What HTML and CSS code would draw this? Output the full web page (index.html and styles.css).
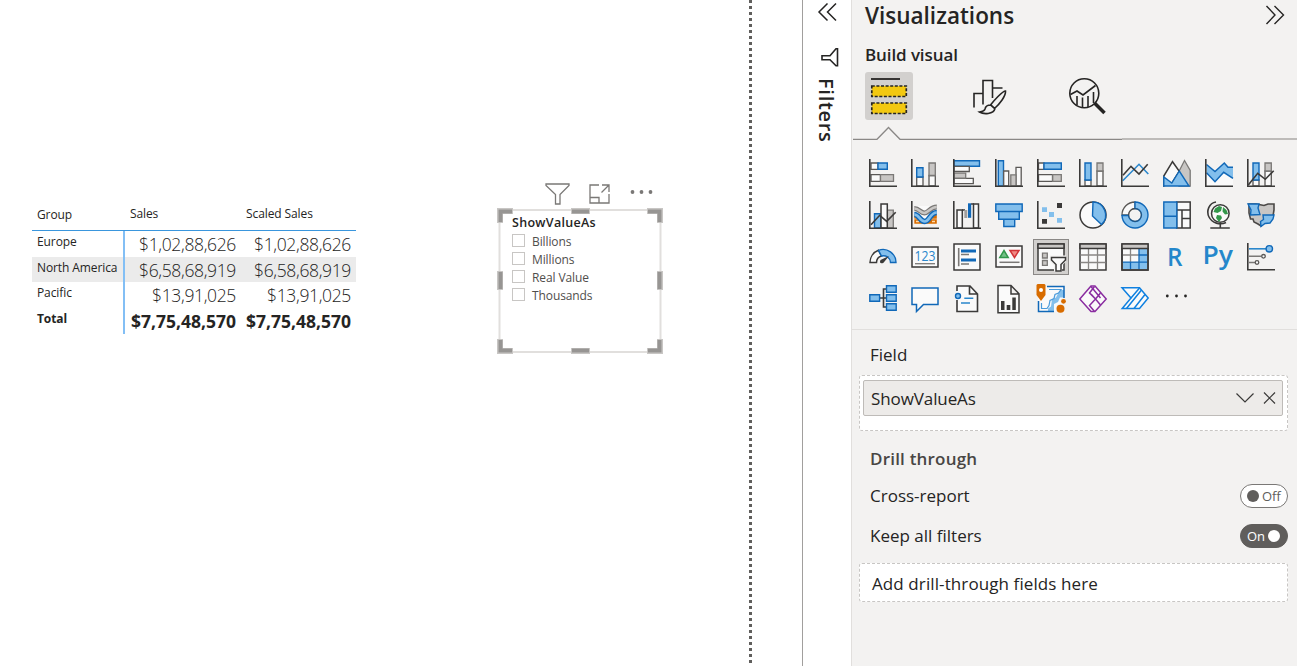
FILE: index.html
```
<!DOCTYPE html>
<html lang="en">
<head>
<meta charset="utf-8">
<title>Visualizations</title>
<link rel="stylesheet" href="styles.css">
</head>
<body>
<div class="app">
  <main class="canvas">
    <section class="matrix">
      <div class="row head"><span class="name group">Group</span><span class="col">Sales</span><span class="col scaled">Scaled Sales</span></div>
      <div class="row"><span class="name">Europe</span><span class="val">$1,02,88,626</span><span class="val">$1,02,88,626</span></div>
      <div class="row alt"><span class="name">North America</span><span class="val">$6,58,68,919</span><span class="val">$6,58,68,919</span></div>
      <div class="row"><span class="name">Pacific</span><span class="val">$13,91,025</span><span class="val">$13,91,025</span></div>
      <div class="row total"><span class="name">Total</span><span class="val">$7,75,48,570</span><span class="val">$7,75,48,570</span></div>
    </section>
    <section class="slicer">
      <svg class="tools" width="110" height="24" viewBox="0 0 110 24" fill="none" stroke="#7a7876" stroke-width="1.3">
        <path d="M1 2h23v1.500l-9 9V22h-4.500v-9.500L1 3.500z"/>
        <path d="M54 3H45v18h19V12M45 15.500h9V21M57 3h7v7M64 3l-7.500 7.500"/>
        <g fill="#7a7876" stroke="none"><circle cx="87.500" cy="10" r="1.900"/><circle cx="96.500" cy="10" r="1.900"/><circle cx="105.500" cy="10" r="1.900"/></g>
      </svg>
      <div class="slicer-box">
        <svg class="handles" width="166" height="146" viewBox="0 0 166 146" fill="none">
          <rect x="2.500" y="2" width="161" height="142" stroke="#e1dfdd" stroke-width="2"/>
          <g stroke="#c8c6c4" stroke-width="6"><path d="M3 15V3h13M150 3h13v12M3 131v12h13M150 143h13v-12M74 3h19M74 143h19M3 63v19M163 63v19"/></g>
          <g stroke="#979593" stroke-width="4"><path d="M3.500 14V3.500H15M151 3.500h11.500V14M3.500 132v10.500H15M151 142.500h11.500V132M75 3.500h17M75 142.500h17M3.500 64v17M162.500 64v17"/></g>
        </svg>
        <div class="slicer-title">ShowValueAs</div>
        <ul>
          <li><i></i><span>Billions</span></li>
          <li><i></i><span>Millions</span></li>
          <li><i></i><span>Real Value</span></li>
          <li><i></i><span>Thousands</span></li>
        </ul>
      </div>
    </section>
    <div class="page-edge"></div>
  </main>

  <aside class="filters">
    <svg width="20" height="20" viewBox="0 0 20 20" fill="none" stroke="#252423" stroke-width="1.500"><path d="M10.500 .500L2 9l8.500 8.500M19 .500L10.500 9l8.500 8.500"/></svg>
    <svg class="funnel" width="20" height="20" viewBox="0 0 20 20" fill="none" stroke="#252423" stroke-width="1.600"><path d="M17.500 .800v17H16l-6-6H2v-4h8l6-7z"/></svg>
    <span>Filters</span>
  </aside>

  <aside class="pane">
    <header>
      <h1>Visualizations</h1>
      <svg width="20" height="20" viewBox="0 0 20 20" fill="none" stroke="#252423" stroke-width="1.400"><path d="M1.500 1l8.500 9-8.500 9M9.500 1l9 9-9 9"/></svg>
    </header>
    <h2>Build visual</h2>
    <div class="tabs">
      <div class="tab active"><svg width="48" height="48" viewBox="0 0 48 48"><path d="M6 7h29" stroke="#252423" stroke-width="1.800"/><g fill="#f2c811" stroke="#252423" stroke-width="1.700" stroke-dasharray="3 1.600"><rect x="6.800" y="14" width="34.500" height="10.500"/><rect x="6.800" y="31" width="34.500" height="10.500"/></g></svg></div>
      <div class="tab"><svg width="48" height="48" viewBox="0 0 48 48" fill="none" stroke="#252423" stroke-width="1.600"><path d="M10 35.500V21.500h8.500M19 32.500V8.500h9.500V26M29 16h9.500"/><path fill="#f3f2f1" d="M41.500 19c-3 0-12 10-15 14l4 3.500C35.500 32 42 24 41.500 19zM26.500 33c-4 0-5 1.500-5.500 4-.5 2-2.500 2.500-5.500 3 4 2.500 14 2.500 15.500-3.500M27 33l4 3.500"/></svg></div>
      <div class="tab"><svg width="48" height="48" viewBox="0 0 48 48" fill="none" stroke="#252423" stroke-width="1.600"><circle cx="21.300" cy="21.300" r="14.500"/><path d="M7.500 22.500l6.500-3.500 6 4L32.500 13.500M14 24v9M19.500 25.500V35M25 24v11M30.500 20v11"/><path d="M31.500 31l10 10" stroke-width="3.500"/></svg></div>
    </div>
    <svg class="divider" width="445" height="14" viewBox="0 0 445 14" fill="none"><path d="M270 13h175" stroke="#bdbbb9" stroke-width="1.800"/><path d="M1 13.300h24L36.500 1.500 48 13.300h222" stroke="#8a8886" stroke-width="1.300"/></svg>

    <div class="gallery">
      <svg viewBox="0 0 28 28"><path class="w" d="M2 4h7v6.300H2zM2 15.700h9.500v6.600H2z"/><path class="b" d="M9 4h9.300v6.300H9z"/><path class="g" d="M11.500 15.700h13v6.600h-13z"/><path class="ax" d="M.8 0v27.200H28"/></svg>
      <svg viewBox="0 0 28 28"><path class="w" d="M5.700 18H12v9H5.700zM18 16.500h6.300V27H18z"/><path class="b" d="M5.700 8.700H12V18H5.700z"/><path class="g" d="M18 4h6.300v12.500H18z"/><path class="ax" d="M.8 0v27.200H28"/></svg>
      <svg viewBox="0 0 28 28"><path class="b" d="M1 1.800h25.500v5.500H1z"/><path class="w" d="M1 7.300h15.300v5.200H1zM1 19.300h19.300v5.300H1z"/><path class="g" d="M1 14.200h11.700v5H1z"/><path class="ax" d="M.8 0v27.200H28"/></svg>
      <svg viewBox="0 0 28 28"><path class="b" d="M3.300 1.800h5.200V27H3.300z"/><path class="w" d="M8.700 12h5v15h-5zM21 8.300h5.200V27H21z"/><path class="g" d="M15.800 15.800H21V27h-5.200z"/><path class="ax" d="M.8 0v27.200H28"/></svg>
      <svg viewBox="0 0 28 28"><path class="w" d="M1.500 4H7v6.300H1.500zM1.500 15.700h14v6.600h-14z"/><path class="b" d="M7 4h17.300v6.300H7z"/><path class="g" d="M15.700 15.700h8.600v6.600h-8.600z"/><path class="ax" d="M.8 0v27.200H28"/></svg>
      <svg viewBox="0 0 28 28"><path class="w" d="M6 21h6v6H6zM18 12h6v15h-6z"/><path class="b" d="M6 4h6v17H6z"/><path class="g" d="M18 4h6v8h-6z"/><path class="ax" d="M.8 0v27.200H28"/></svg>
      <svg viewBox="0 0 28 28"><path class="lb" d="M1.700 21.700L18 5.300l9.300 9.700"/><path class="ld" d="M2 16.300l8-9 8 7.700 8.700-9.700"/><path class="ax" d="M.8 0v27.200H28"/></svg>
      <svg viewBox="0 0 28 28"><path class="g" d="M16.300 11.700L21.500 1.500l5.700 10V27H16z"/><path class="w dk" d="M.8 27V17l8.700-14.300 6.800 9.500L9 24z"/><path class="b" d="M.8 27v-9l8 6 7.500-12L26 27z"/></svg>
      <svg viewBox="0 0 28 28"><path fill="#fafafa" d="M1 13l9 9 9-9 9 7v7H1z"/><path fill="#83bfec" d="M1.500 5.500l8.500 7 9.300-8.500 3.700 4.300h5v11L18.700 13.300 10 22.700l-8.500-9z"/><path class="l2" d="M1.500 5.500l8.500 7 9.300-8.500 3.700 4.300h5M1.500 13.700l8.500 9 8.700-9.400 9.300 6"/><path class="ax" d="M.8 0v27.200H28"/></svg>
      <svg viewBox="0 0 28 28"><path class="w" d="M6 21h6v6H6zM18 12h6.300v15H18z"/><path class="b" d="M6 4h6v17H6z"/><path class="g" d="M18 4h6.300v8H18z"/><path class="ld" d="M1.300 26l9.400-11.700 7.600 6 8.400-8.600"/><path class="ax" d="M.8 0v27.200H28"/></svg>

      <svg viewBox="0 0 28 28"><path class="b" d="M5.500 12.800h6.300V27H5.500z"/><path class="g" d="M18.300 9.200h6V27h-6z"/><path class="w dk" d="M12 3h6.300v24H12z"/><path class="ld" d="M2 23.700l8.700-9.400 7 6 9-9"/><path class="ax" d="M.8 0v27.200H28"/></svg>
      <svg viewBox="0 0 28 28" fill="none"><path fill="#fafafa" d="M3 5h23v18H3z"/><path d="M3.300 15.500h5M3.300 20.500h22.500M20 15.500h5.800" stroke="#d86c00" stroke-width="4.500"/><path d="M5 20.500h3M21 20.500h3" stroke="#ffd9a8" stroke-width="1.500"/><path d="M3.300 7.500c5 0 6 4.500 10 4.500s6-6 12.500-6" stroke="#7a7876" stroke-width="5"/><path d="M3.300 7.500c5 0 6 4.500 10 4.500s6-6 12.500-6" stroke="#c8c6c4" stroke-width="2.500"/><path d="M3.300 13.500c5 0 5.500 7 10.500 7s5-9 12-9" stroke="#1068b8" stroke-width="5.500"/><path d="M3.300 13.500c5 0 5.500 7 10.500 7s5-9 12-9" stroke="#83bfec" stroke-width="2.700"/><path class="ax" d="M.8 0v27.200H28"/></svg>
      <svg viewBox="0 0 28 28"><path class="w dk" d="M4 9h5.300v18H4zM20.500 3h5v24h-5z"/><path class="ld" d="M9 9h3M18 3h3"/><path fill="#a19f9d" d="M11.300 9h3v8h-3z"/><path fill="#1068b8" d="M15 2.300h3.200v14.500H15z"/><path class="ax" d="M.8 0v27.200H28"/></svg>
      <svg viewBox="0 0 28 28"><path class="b" d="M.8 3h26.400v7.500H.8zM3.700 10.500h20.600v7.800H3.700zM8.800 18.300h10.900v7.200H8.800z"/></svg>
      <svg viewBox="0 0 28 28"><path fill="#3b3a39" d="M20 2h5v5h-5zM5 18h5v4.800H5z"/><path fill="#83bfec" d="M5 6.300h5V11H5zM12 11h5v5h-5zM20 17h5v4.700h-5z"/><path class="ax" d="M.8 0v27.200H28"/></svg>
      <svg viewBox="0 0 28 28"><circle class="w dk" cx="14" cy="14" r="13"/><path class="b" d="M14 1a13 13 0 0 1 8.500 22.500L13.500 15z"/></svg>
      <svg viewBox="0 0 28 28"><path class="w" d="M1 14A13 13 0 0 1 14 1v6.500A6.500 6.500 0 0 0 7.500 14z"/><path class="b" d="M14 1A13 13 0 1 1 1 14.500h6.500A6.500 6.500 0 1 0 14 7.500z"/><circle cx="14" cy="14" r="6.300" fill="none" stroke="#3b3a39" stroke-width=".6"/></svg>
      <svg viewBox="0 0 28 28"><path class="w dk" d="M13.700 1h13.500v26H13.700zM13.700 9H27M19 9v18M19 17.500h8"/><path class="b" d="M.8 1h13v14.300H.8zM.8 15.300h13V27H.8z"/></svg>
      <svg viewBox="0 0 28 28"><circle class="w dk" cx="15.300" cy="12.500" r="8.800"/><path fill="#33984b" d="M10 7.500l4-2.500 3 1-1 4-3.500 2-4-1zM18 6l3.500 3 1.500 4-3 .5-2.500-3zM12 14l4 .5 1 2.500-3 4-3-4z"/><path class="ld" d="M11 1C4 2 1 10 4 16c3 6 11 8.500 17 5.500M15.300 23v4M5.300 27h19.500"/></svg>
      <svg viewBox="0 0 28 28"><path fill="#c8c6c4" stroke="#4a4846" stroke-width="1.600" d="M12 3.500l5 1 4-1.500h6v6l-1 6-3 4-5 2-4 4-3-2-4-2-1-3H3.500L2 12V3h7z"/><path class="b" d="M1 3h11l-1 4 2 6.500-9.500.5L4 9zM16 14h11l-1 4-3 4-5 .500-4 3-.5-5 3-2z"/></svg>

      <svg viewBox="0 0 28 28"><path class="w dk" d="M1 19.500A13 13 0 0 1 9.500 7.300l3 5.700a7 7 0 0 0-5 6.500z"/><path class="b" d="M9.500 7.300A13 13 0 0 1 27 19.500h-5.500A7 7 0 0 0 12.500 13z"/><path fill="#3b3a39" d="M20 13l-8.500 4c-1.500 3 .5 4 3 2.700z"/></svg>
      <svg viewBox="0 0 28 28"><path class="w dk" d="M1 4h26v20H1z"/><text class="num" x="3.500" y="18" textLength="21" lengthAdjust="spacingAndGlyphs">123</text><path d="M4 20.700h20" stroke="#7a7876" stroke-width="1.300"/></svg>
      <svg viewBox="0 0 28 28"><path class="w dk" d="M1 1h26v26H1z"/><path d="M5.700 5v18.300M8 11.500h8M8 21h8" stroke="#7a7876" stroke-width="1.600"/><path d="M8 8h15M8 17h15" stroke="#1068b8" stroke-width="2.800"/></svg>
      <svg viewBox="0 0 28 28"><path class="w dk" d="M1 3h26v21H1z"/><path fill="#74c088" stroke="#33984b" stroke-width="1.500" d="M4.800 14.500h8.400L9 7.500z"/><path fill="#f08a85" stroke="#d13438" stroke-width="1.500" d="M15 7.500h9l-4.500 7z"/><path d="M4.500 19.300h20" stroke="#7a7876" stroke-width="1.500"/></svg>
      <svg class="selected" viewBox="-4 -4 36 36"><path class="w dk" d="M1 1h26v26H1z"/><path class="g dk" d="M1 1h26v4.300H1z"/><path class="g" d="M5.500 10.200h4.800V15H5.500zM5.500 17.500h4.800v4.800H5.500z"/><path d="M13 12.500h16v6l-4 4v6h-8v-6l-4-4z" fill="#f3f2f1"/><path class="w dk" d="M14.500 14.500h14v2.500L24 21.500V28h-5v-6.500L14.500 17z"/></svg>
      <svg viewBox="0 0 28 28"><path class="w dk" d="M1 1h26v26H1z"/><path d="M9.500 6v20.500M18.500 6v20.500M1.500 12h25M1.500 19.500h25" stroke="#8a8886" stroke-width="1.300"/><path class="g dk" d="M1 1h26v4.500H1z"/></svg>
      <svg viewBox="0 0 28 28"><path class="w dk" d="M1 1h26v26H1z"/><path fill="#83bfec" d="M18 6h8v20H2v-7h16z"/><path d="M9.500 6v13.500M1.500 12h17" stroke="#8a8886" stroke-width="1.300"/><path d="M18 6v20.500M18 12h8.500M1.500 19.200h25M9.500 19v7.500" stroke="#1068b8" stroke-width="1.300"/><path class="g dk" d="M1 1h26v4.500H1z"/><path d="M1 5v22h26V5" fill="none" stroke="#3b3a39" stroke-width="1.500"/></svg>
      <svg viewBox="0 0 28 28"><text class="lang" x="4" y="23" textLength="15.500" lengthAdjust="spacingAndGlyphs">R</text></svg>
      <svg viewBox="0 0 28 28"><text class="lang" x="-2.500" y="20.500" textLength="30.500" lengthAdjust="spacingAndGlyphs">Py</text></svg>
      <svg viewBox="0 0 28 28"><path class="lb" d="M2 5.800h18"/><circle class="b" cx="22.300" cy="5.800" r="3.200"/><path d="M2 13.300h12.500M2 19.500h6" stroke="#7a7876" stroke-width="1.600"/><circle cx="16.500" cy="13.300" r="1.800" class="w"/><circle cx="10" cy="19.500" r="1.800" class="w"/><path class="ax" d="M.8 0v26.700H28"/></svg>

      <svg viewBox="0 0 28 28"><path class="ld" d="M11 13h6M17 4h-2.500v18H17"/><path class="b" d="M.8 9.700h9.800v6.600H.8zM17.500.8h9.700v6.400h-9.700zM17.500 9.700h9.700v6.600h-9.700zM17.500 18.800h9.700v6.400h-9.700z"/></svg>
      <svg viewBox="0 0 28 28"><path d="M1 3h26v16.500H12.500l-7 7v-7H1z" fill="#fafafa" stroke="#1068b8" stroke-width="1.500"/></svg>
      <svg viewBox="0 0 28 28"><path fill="#fafafa" d="M4 1h13l7.500 8v17.500H4z"/><path class="ld" d="M4 6V1h13l7.500 8v17.500H4V15M16.500 1v8h8"/><circle class="b" cx="5" cy="11" r="2.500"/><path d="M11.300 13.300h9M8 18h9" stroke="#2a87cc" stroke-width="1.500"/></svg>
      <svg viewBox="0 0 28 28"><path class="w dk" d="M3 .5h13l8 8.300v19H3zM16 .5V9h8"/><path fill="#3b3a39" d="M6 16h3.500v9H6zM11.700 20h3.600v5h-3.600zM17.300 12.500h3.500V25h-3.500z"/></svg>
      <svg viewBox="0 0 28 28"><path fill="#fafafa" d="M1 2h26v24.500H1z"/><path fill="#83bfec" d="M27 5v7.500h-4l-2 4.500-4 2v7.500h-6v-3l3-2 1-7 4-2 2-4 3-3.500z"/><path class="l2" stroke-width="2" d="M10 1.500h17v11.500M1.500 16v10.500H17"/><path d="M4.500 18v5.500H10l2-3 1-5 4-2 1-4 3.500-1.500 2.500-3.500H12" fill="none" stroke="#4a9bdb" stroke-width="1.200"/><path fill="#d86c00" d="M-.5 0l1-1h7l1 1v10L4 16l-4.500-6z"/><circle cx="4" cy="5" r="2" fill="#fff"/><circle cx="23.500" cy="23.700" r="5" fill="#f3f2f1"/><circle cx="26.500" cy="16.300" r="3.400" fill="#f3f2f1"/><circle cx="23.500" cy="23.700" r="4" fill="#d86c00"/><circle cx="26.500" cy="16.300" r="2.400" fill="#d86c00"/></svg>
      <svg viewBox="0 0 28 28" fill="none" stroke="#8a2da0" stroke-width="1.500"><path fill="#fafafa" d="M12 1h4l11.200 13L16 26.500h-4L.8 14z"/><path d="M15.500 1.500L10.500 8l6 6-6 6.500 5 6M12 1.500l9.500 11.500M21.500 8l-5 6 5 6M16.500 14L12 9"/></svg>
      <svg viewBox="0 0 28 28" fill="none" stroke="#0f80e0" stroke-width="1.500"><path fill="#fafafa" d="M1 2.700h17.500L27.200 13l-8.700 10.500H1.200L10 13z"/><path d="M10 13l8.500-10M5.500 23.500L20.500 5M13 23.500L24 9.500"/></svg>
      <svg viewBox="0 0 28 28" fill="#252423"><circle cx="4.300" cy="11" r="1.400"/><circle cx="13.500" cy="11" r="1.400"/><circle cx="22.500" cy="11" r="1.400"/></svg>
    </div>

    <div class="wells">
      <h3>Field</h3>
      <div class="well">
        <div class="pill"><span>ShowValueAs</span>
          <svg width="44" height="16" viewBox="0 0 44 16" fill="none" stroke="#3b3a39" stroke-width="1.200"><path d="M3.500 3.500l8.500 8.500 8.500-8.500M31 2.500l11 11M42 2.500l-11 11"/></svg>
        </div>
      </div>
      <h3 class="drill">Drill through</h3>
      <div class="option"><span class="cross">Cross-report</span><div class="toggle"><i></i><b>Off</b></div></div>
      <div class="option"><span class="keep">Keep all filters</span><div class="toggle on"><b>On</b><i></i></div></div>
      <div class="drop"><span>Add drill-through fields here</span></div>
    </div>
  </aside>
</div>
</body>
</html>
```
FILE: styles.css
```
* { box-sizing: border-box; }
body { margin: 0; font-family: "Open Sans", "Noto Sans", sans-serif; color: #252423; background: #fff; }
h1, h2, h3, ul { margin: 0; padding: 0; list-style: none; }
svg { display: block; }
.app { display: flex; width: 1297px; height: 666px; overflow: hidden; }

/* Report canvas: visuals are freely placed */
.canvas { position: relative; flex: 0 0 802px; }
.page-edge { position: absolute; left: 749px; top: 0; width: 3px; height: 666px; background: repeating-linear-gradient(#605e5c 0 3px, transparent 3px 6px); }
.matrix { position: absolute; left: 32px; top: 199px; width: 324px; }
.row { display: grid; grid-template-columns: 93px 115px 116px; height: 25.500px; }
.head { height: 32px; border-bottom: 1px solid #3a96dd; }
.row span { white-space: nowrap; }
.name { padding-left: 5px; font-size: 12px; line-height: 21px; letter-spacing: -.1px; border-right: 2px solid #83bff5; }
.head .group { border-right: 0; line-height: 31px; }
.col { padding-left: 5px; font-size: 12px; line-height: 29px; letter-spacing: -.1px; }
.col.scaled { padding-left: 6px; }
.val { padding-right: 4px; text-align: right; font-size: 17.500px; line-height: 26px; letter-spacing: -.35px; font-weight: 330; }
.val:last-child { padding-right: 5px; }
.alt { background: #ebebeb; }
.total { font-weight: 700; }
.total .val { font-weight: 700; letter-spacing: 0; }

.slicer { position: absolute; left: 497px; top: 182px; width: 166px; }
.tools { margin-left: 48px; }
.slicer-box { position: relative; height: 146px; margin-top: 2px; padding: 6px 0 0 14px; }
.handles { position: absolute; left: 0; top: 0; }
.slicer-title { font-size: 12.500px; line-height: 17px; font-weight: 550; letter-spacing: .3px; padding-left: 1px; }
.slicer ul { padding: 2px 0 0 1px; }
.slicer li { display: flex; align-items: center; gap: 7px; height: 17.900px; font-size: 12px; letter-spacing: -.1px; color: #504e4c; }
.slicer li i { width: 13px; height: 13px; border: 1px solid #c8c6c4; margin-top: -2px; }

/* Collapsed filters pane */
.filters { flex: 0 0 50px; display: flex; flex-direction: column; padding: 3px 0 0 14px; border-left: 1px solid #a19f9d; border-right: 1px solid #e1dfdd; }
.filters .funnel { margin: 25px 0 0 3px; }
.filters span { margin: 10px 0 0 -4px; width: 26px; writing-mode: vertical-rl; font-size: 20px; line-height: 26px; font-weight: 580; letter-spacing: .7px; }

/* Visualizations pane */
.pane { flex: 1; display: flex; flex-direction: column; background: #f3f2f1; }
.pane header { display: flex; justify-content: space-between; align-items: center; height: 30px; padding: 0 12px 0 13px; }
.pane h1 { font-size: 22.500px; line-height: 30px; padding-top: 2px; font-weight: 570; letter-spacing: 0; }
.pane h2 { padding-left: 13px; height: 42px; font-size: 17px; line-height: 50px; font-weight: 560; letter-spacing: -.1px; }
.tabs { display: flex; gap: 51px; padding-left: 13px; height: 54px; }
.tab { width: 48px; height: 48px; border-radius: 3px; }
.active { background: #d2d0ce; }
.divider { flex: none; }
.gallery { display: grid; grid-template-columns: repeat(10, 42px); grid-auto-rows: 42px; height: 190px; padding: 19px 0 0 17px; border-bottom: 1px solid #e1dfdd; }
.gallery svg { width: 28px; height: 28px; overflow: visible; }
.gallery .selected { width: 36px; height: 36px; margin: -4px; background: #d2d0ce; outline: 1px solid #8a8886; outline-offset: -1px; }
.w { fill: #fafafa; stroke: #7a7876; stroke-width: 1.300; }
.w:not(.dk) { stroke: #5a5856; }
.b { fill: #83bfec; stroke: #1068b8; stroke-width: 1.400; }
.g { fill: #c8c6c4; stroke: #7a7876; stroke-width: 1.300; }
.dk { stroke: #3b3a39; stroke-width: 1.500; }
.ax, .ld { fill: none; stroke: #3b3a39; stroke-width: 1.600; }
.lb { fill: none; stroke: #2a87cc; stroke-width: 1.600; }
.l2 { fill: none; stroke: #1068b8; stroke-width: 1.500; }
.num { font-size: 14.500px; fill: #2a87cc; }
.lang { font-size: 25px; font-weight: 650; fill: #2487cb; }

.wells { padding: 0 9px 0 7px; }
.pane h3 { padding-left: 11px; font-size: 17px; line-height: 50px; height: 45px; font-weight: 400; letter-spacing: 0; }
.well { height: 56px; padding: 4px; background: #fff; border: 1px dashed #c8c6c4; border-radius: 3px; }
.pill { display: flex; align-items: center; justify-content: space-between; height: 36px; margin-left: -1px; padding: 0 5px 0 7px; background: #edebe9; border: 1px solid #bebbb8; border-radius: 2px; font-size: 17px; letter-spacing: -.1px; }
.pane h3.drill { font-weight: 560; line-height: 55px; height: 45px; color: #484644; letter-spacing: .2px; }
.option { display: flex; align-items: center; justify-content: space-between; height: 40px; padding-left: 11px; font-size: 17px; }
.option span { padding-bottom: 2px; }
.toggle { display: flex; align-items: center; gap: 3px; width: 48px; height: 24px; padding: 0 6px; border: 1px solid #7a7876; border-radius: 12px; background: #fff; }
.toggle i { width: 12px; height: 12px; border-radius: 50%; background: #605e5c; }
.toggle b { font-size: 13px; font-weight: 400; color: #605e5c; }
.toggle.on { background: #605e5c; border-color: #605e5c; }
.toggle.on i { background: #fff; }
.toggle.on b { color: #fff; }
.drop { display: flex; align-items: center; height: 39px; margin-top: 7px; padding: 2px 0 0 12px; background: #fff; border: 1px dashed #c8c6c4; border-radius: 3px; font-size: 17px; letter-spacing: .1px; }
```
